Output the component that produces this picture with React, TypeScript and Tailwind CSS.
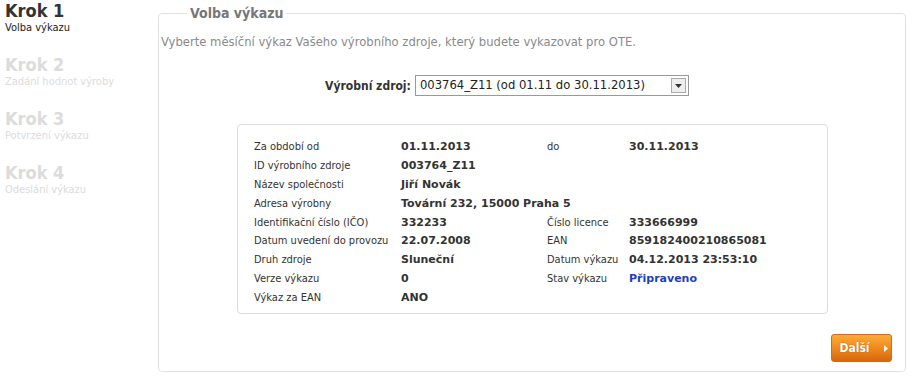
const steps = [
  { title: 'Krok 1', sub: 'Volba výkazu', active: true },
  { title: 'Krok 2', sub: 'Zadání hodnot výroby', active: false },
  { title: 'Krok 3', sub: 'Potvrzení výkazu', active: false },
  { title: 'Krok 4', sub: 'Odeslání výkazu', active: false },
]

type Row = { l: string; v: string; l2?: string; v2?: string; blue?: boolean }

const rows: Row[] = [
  { l: 'Za období od', v: '01.11.2013', l2: 'do', v2: '30.11.2013' },
  { l: 'ID výrobního zdroje', v: '003764_Z11' },
  { l: 'Název společnosti', v: 'Jiří Novák' },
  { l: 'Adresa výrobny', v: 'Tovární 232, 15000 Praha 5' },
  { l: 'Identifikační číslo (IČO)', v: '332233', l2: 'Číslo licence', v2: '333666999' },
  { l: 'Datum uvedení do provozu', v: '22.07.2008', l2: 'EAN', v2: '859182400210865081' },
  { l: 'Druh zdroje', v: 'Sluneční', l2: 'Datum výkazu', v2: '04.12.2013 23:53:10' },
  { l: 'Verze výkazu', v: '0', l2: 'Stav výkazu', v2: 'Připraveno', blue: true },
  { l: 'Výkaz za EAN', v: 'ANO' },
]

const wide = "font-['DejaVu_Sans',sans-serif]"

export default function App() {
  return (
    <div className="flex w-[912px] h-[379px] bg-white text-[11px] text-[#333] font-['DejaVu_Sans_Condensed','DejaVu_Sans',sans-serif]">
      <div className="w-[158px] shrink-0 pl-[5px]">
        {steps.map((s) => (
          <div key={s.title} className="h-[54px]">
            <div className={`text-[18px] font-bold leading-[22px] ${s.active ? 'text-[#333]' : 'text-[#dcdcdc]'}`}>{s.title}</div>
            <div className={`leading-[12px] ${s.active ? 'text-[#222]' : 'text-[#dcdcdc]'}`}>{s.sub}</div>
          </div>
        ))}
      </div>

      <fieldset className="mt-[5px] mb-[7px] mr-[6px] flex-1 border border-[#e2e2e2] rounded-[4px] px-0 pb-0 flex flex-col">
        <legend className="ml-[28px] px-[3px] text-[14px] font-bold text-[#777] leading-[16px]">Volba výkazu</legend>

        <p className={`ml-[2px] mt-[14px] text-[11.6px] text-[#8a8a8a] leading-[14px] ${wide}`}>
          Vyberte měsíční výkaz Vašeho výrobního zdroje, který budete vykazovat pro OTE.
        </p>

        <div className="mt-[26px] flex items-center justify-center gap-[4px] pr-[50px]">
          <span className="text-[12px] font-bold">Výrobní zdroj:</span>
          <div className="w-[274px] h-[21px] border border-[#999] flex items-center justify-between pl-[4px] pr-[2px] text-[#222]">
            <span className={`text-[11.6px] ${wide}`}>003764_Z11 (od 01.11 do 30.11.2013)</span>
            <span className="w-[15px] h-[15px] border border-[#aaa] bg-[#eee] flex items-center justify-center">
              <svg width="7" height="4" viewBox="0 0 7 4"><path d="M0 0h7L3.5 4z" fill="#333" /></svg>
            </span>
          </div>
        </div>

        <div className="mt-[28px] ml-[78px] w-[591px] h-[190px] border border-[#ddd] rounded-[4px] pl-[16px] pt-[13px]">
          {rows.map((r) => (
            <div key={r.l} className="grid grid-cols-[147px_146px_82px_1fr] h-[18.8px] items-center leading-[14px]">
              <span>{r.l}</span>
              <span className={`font-bold whitespace-nowrap ${wide} ${r.l2 ? '' : 'col-span-3'}`}>{r.v}</span>
              {r.l2 && <span>{r.l2}</span>}
              {r.l2 && <span className={`font-bold whitespace-nowrap ${wide} ${r.blue ? 'text-[#1d3fbb]' : ''}`}>{r.v2}</span>}
            </div>
          ))}
        </div>

        <div className="flex justify-end mt-[20px] mr-[13px]">
          <button className="w-[61px] h-[28px] rounded-[3px] border border-[#d96a10] bg-gradient-to-b from-[#fbab3a] via-[#f08a1c] to-[#d8650f] text-white font-bold text-[12px] flex items-center justify-center gap-[14px] pl-[4px]">
            <span className="[text-shadow:0_0_1px_#a04c00]">Další</span>
            <svg width="4" height="7" viewBox="0 0 4 7"><path d="M0 0l4 3.5L0 7z" fill="#fff" /></svg>
          </button>
        </div>
      </fieldset>
    </div>
  )
}
